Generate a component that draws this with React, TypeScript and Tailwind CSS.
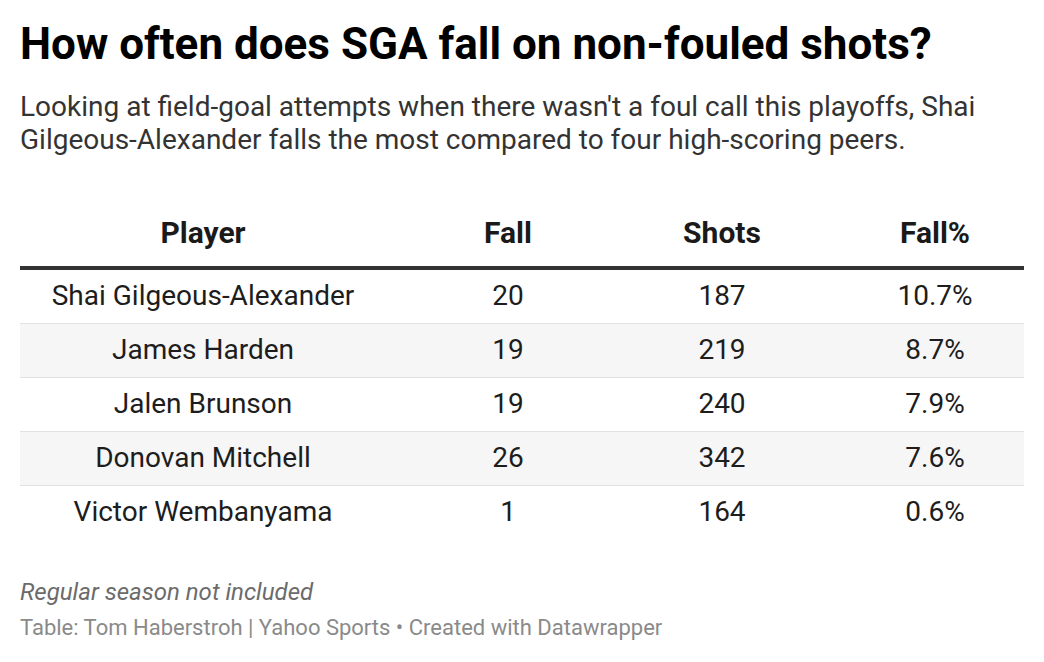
import React from "react";

const rows = [
  ["Shai Gilgeous-Alexander", "20", "187", "10.7%"],
  ["James Harden", "19", "219", "8.7%"],
  ["Jalen Brunson", "19", "240", "7.9%"],
  ["Donovan Mitchell", "26", "342", "7.6%"],
  ["Victor Wembanyama", "1", "164", "0.6%"],
];

export default function App() {
  return (
    <div
      className="w-[1044px] h-[662px] bg-white px-[20px] pt-[18px] text-[#1d1d1d]"
      style={{ fontFamily: "Roboto, 'Liberation Sans', sans-serif" }}
    >
      <h1 className="text-[44px] leading-[52px] font-bold text-black">
        How often does SGA fall on non-fouled shots?
      </h1>
      <p className="mt-[20px] text-[28px] leading-[33px] text-[#333333]">
        Looking at field-goal attempts when there wasn't a foul call this playoffs, Shai
        Gilgeous-Alexander falls the most compared to four high-scoring peers.
      </p>
      <div className="mt-[59px]">
        <div className="grid grid-cols-[366px_244px_184px_1fr] pb-[15px] border-b-[4px] border-[#333333] text-[30px] leading-[36px] font-bold text-[#1a1a1a]">
          <div className="text-center">Player</div>
          <div className="text-center">Fall</div>
          <div className="text-center">Shots</div>
          <div className="text-center pl-[32px]">Fall%</div>
        </div>
        {rows.map((r, i) => (
          <div
            key={r[0]}
            className={`grid grid-cols-[366px_244px_184px_1fr] h-[54px] items-center text-[28px] leading-[33px] pb-[3px] ${
              i % 2 === 1 ? "bg-[#f6f6f6]" : "bg-white"
            } ${i < rows.length - 1 ? "border-b border-[#e2e2e2]" : ""}`}
          >
            <div className="text-center">{r[0]}</div>
            <div className="text-center">{r[1]}</div>
            <div className="text-center">{r[2]}</div>
            <div className="text-center pl-[32px]">{r[3]}</div>
          </div>
        ))}
      </div>
      <p className="mt-[38px] text-[24px] leading-[28px] italic text-[#6b6b6b]">
        Regular season not included
      </p>
      <p className="mt-[8px] text-[22px] leading-[28px] text-[#8a8a8a]">
        Table: Tom Haberstroh | Yahoo Sports • Created with Datawrapper
      </p>
    </div>
  );
}
